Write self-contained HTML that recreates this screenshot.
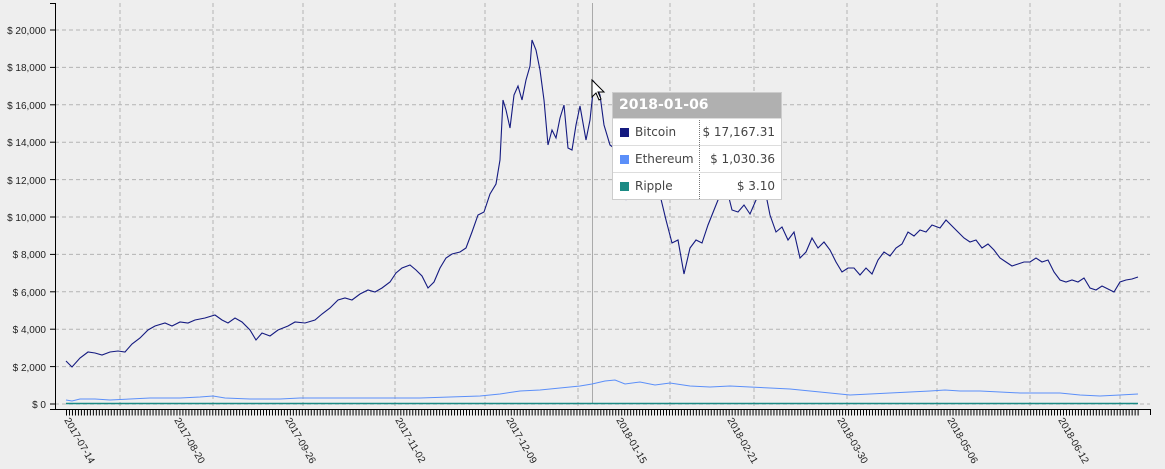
<!DOCTYPE html>
<html><head><meta charset="utf-8"><style>
body{margin:0;background:#eeeeee;width:1165px;height:469px;overflow:hidden;font-family:"Liberation Sans",sans-serif}
svg{position:absolute;left:0;top:0}
.tt{position:absolute;left:612px;top:92px;width:168px;background:#fff;border:1px solid #ccc;font-family:"DejaVu Sans","Liberation Sans",sans-serif;font-size:12px;color:#444}
.tt .h{background:#b0b0b0;color:#fff;font-weight:bold;font-size:14px;height:25px;line-height:25px;padding-left:6px}
.tt .r{height:26px;line-height:26px;border-top:1px solid #ddd;position:relative}
.tt .r span.sw{position:absolute;left:7px;top:9px;width:9px;height:9px}
.tt .r .n{position:absolute;left:22px}
.tt .r .v{position:absolute;right:6px}
.tt .d{position:absolute;left:86px;top:25px;bottom:0;border-left:1px dotted #777}
</style></head><body>
<svg width="1165" height="469" xmlns="http://www.w3.org/2000/svg">
<g stroke="#b4b4b4" stroke-dasharray="4 3" stroke-width="1">
<line x1="55" x2="1150" y1="30" y2="30"/><line x1="55" x2="1150" y1="67.4" y2="67.4"/><line x1="55" x2="1150" y1="104.8" y2="104.8"/><line x1="55" x2="1150" y1="142.2" y2="142.2"/><line x1="55" x2="1150" y1="179.6" y2="179.6"/><line x1="55" x2="1150" y1="217" y2="217"/><line x1="55" x2="1150" y1="254.4" y2="254.4"/><line x1="55" x2="1150" y1="291.8" y2="291.8"/><line x1="55" x2="1150" y1="329.2" y2="329.2"/><line x1="55" x2="1150" y1="366.6" y2="366.6"/><line x1="55" x2="1150" y1="404" y2="404"/>
<line x1="120" x2="120" y1="3" y2="409"/><line x1="213" x2="213" y1="3" y2="409"/><line x1="303" x2="303" y1="3" y2="409"/><line x1="395" x2="395" y1="3" y2="409"/><line x1="485" x2="485" y1="3" y2="409"/><line x1="578" x2="578" y1="3" y2="409"/><line x1="670" x2="670" y1="3" y2="409"/><line x1="754" x2="754" y1="3" y2="409"/><line x1="847" x2="847" y1="3" y2="409"/><line x1="937" x2="937" y1="3" y2="409"/><line x1="1030" x2="1030" y1="3" y2="409"/><line x1="1120" x2="1120" y1="3" y2="409"/>
</g>
<g font-size="10" fill="#222" text-anchor="end">
<text x="46" y="34">$ 20,000</text><text x="46" y="71">$ 18,000</text><text x="46" y="109">$ 16,000</text><text x="46" y="146">$ 14,000</text><text x="46" y="184">$ 12,000</text><text x="46" y="221">$ 10,000</text><text x="46" y="258">$ 8,000</text><text x="46" y="296">$ 6,000</text><text x="46" y="333">$ 4,000</text><text x="46" y="371">$ 2,000</text><text x="46" y="408">$ 0</text>
</g>
<g stroke="#000" stroke-width="1">
<line x1="55.5" x2="55.5" y1="3" y2="409"/><line x1="50" x2="1150" y1="409.5" y2="409.5"/>
<line x1="50" x2="55" y1="3.5" y2="3.5"/>
<line x1="50" x2="55" y1="30" y2="30"/><line x1="50" x2="55" y1="67.4" y2="67.4"/><line x1="50" x2="55" y1="104.8" y2="104.8"/><line x1="50" x2="55" y1="142.2" y2="142.2"/><line x1="50" x2="55" y1="179.6" y2="179.6"/><line x1="50" x2="55" y1="217" y2="217"/><line x1="50" x2="55" y1="254.4" y2="254.4"/><line x1="50" x2="55" y1="291.8" y2="291.8"/><line x1="50" x2="55" y1="329.2" y2="329.2"/><line x1="50" x2="55" y1="366.6" y2="366.6"/><line x1="50" x2="55" y1="404" y2="404"/>
<line x1="1150.5" x2="1150.5" y1="409" y2="415"/>
<line x1="66" x2="1140" y1="412.5" y2="412.5" stroke-width="6" stroke-dasharray="1 1.985"/>
</g>
<line x1="592.5" x2="592.5" y1="3" y2="404" stroke="#aaa"/>
<polyline fill="none" stroke="#5b8ff9" stroke-width="1" points="66,400 72,401 80,399 95,399 110,400 130,399 150,398 180,398 200,397 213,396 225,398 250,399 280,399 300,398 330,398 360,398 390,398 420,398 450,397 480,396 500,394 520,391 540,390 560,388 580,386 592,384 605,381 615,380 625,384 640,382 655,385 670,383 690,386 710,387 730,386 750,387 770,388 790,389 810,391 830,393 850,395 870,394 890,393 910,392 930,391 945,390 960,391 980,391 1000,392 1020,393 1040,393 1060,393 1080,395 1100,396 1120,395 1138,394"/>
<line x1="66" x2="1138" y1="403.5" y2="403.5" stroke="#1b8a84" stroke-width="1.5"/>
<polyline fill="none" stroke="#141a80" stroke-width="1.1" points="66,361 72,367 80,358 88,352 95,353 102,355 110,352 118,351 125,352 132,344 140,338 148,330 155,326 165,323 172,326 180,322 188,323 195,320 205,318 215,315 222,320 228,323 235,318 242,322 250,330 256,340 262,333 270,336 278,330 288,326 295,322 305,323 315,320 322,314 330,308 338,300 345,298 352,300 360,294 368,290 375,292 382,288 390,282 396,273 402,268 410,265 416,270 422,276 428,288 434,282 440,268 446,258 452,254 460,252 466,248 472,232 478,215 484,212 490,194 496,184 500,160 503,100 506,110 510,128 514,95 518,86 522,100 526,80 530,66 532,40 536,50 540,70 544,100 548,145 552,130 556,138 560,118 564,105 568,148 572,150 576,125 580,106 586,140 590,120 594,82 600,95 604,125 610,145 614,148 618,140 622,170 626,200 630,185 636,190 642,160 648,172 654,162 660,195 666,220 672,243 678,240 684,274 690,248 696,240 702,243 708,225 714,210 720,195 726,186 732,210 738,212 744,205 750,214 756,200 762,192 766,195 770,215 776,232 782,227 788,240 794,232 800,258 806,252 812,238 818,248 824,242 830,250 836,262 842,272 848,268 854,268 860,275 866,268 872,274 878,260 884,252 890,256 896,248 902,244 908,232 914,236 920,230 926,232 932,225 940,228 946,220 952,226 958,232 964,238 970,242 976,240 982,248 988,244 994,250 1000,258 1006,262 1012,266 1018,264 1024,262 1030,262 1036,258 1042,262 1048,260 1054,272 1060,280 1066,282 1072,280 1078,282 1084,278 1090,288 1096,290 1102,286 1108,289 1114,292 1120,282 1126,280 1132,279 1138,277"/>
<g font-size="10" fill="#222">
<text transform="translate(64,420) rotate(60)">2017-07-14</text>
<text transform="translate(174,420) rotate(60)">2017-08-20</text>
<text transform="translate(285,420) rotate(60)">2017-09-26</text>
<text transform="translate(395,420) rotate(60)">2017-11-02</text>
<text transform="translate(506,420) rotate(60)">2017-12-09</text>
<text transform="translate(616,420) rotate(60)">2018-01-15</text>
<text transform="translate(727,420) rotate(60)">2018-02-21</text>
<text transform="translate(837,420) rotate(60)">2018-03-30</text>
<text transform="translate(947,420) rotate(60)">2018-05-06</text>
<text transform="translate(1058,420) rotate(60)">2018-06-12</text>
</g>
<path d="M592,80 L592,97 L596,93 L599,100 L601,99 L598,92 L604,92 Z" fill="#fff" stroke="#000" stroke-width="1"/>
</svg>
<div class="tt"><div class="h">2018-01-06</div><div class="d"></div>
<div class="r"><span class="sw" style="background:#141a80"></span><span class="n">Bitcoin</span><span class="v">$ 17,167.31</span></div>
<div class="r"><span class="sw" style="background:#5b8ff9"></span><span class="n">Ethereum</span><span class="v">$ 1,030.36</span></div>
<div class="r"><span class="sw" style="background:#1b8a84"></span><span class="n">Ripple</span><span class="v">$ 3.10</span></div>
</div>
</body></html>
